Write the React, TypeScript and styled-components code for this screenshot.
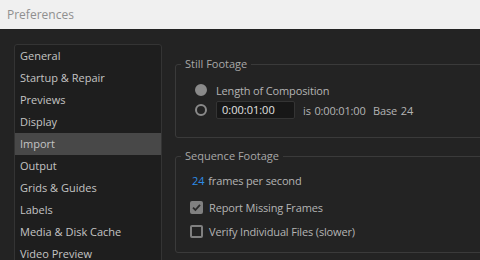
import React from 'react';
import styled, { createGlobalStyle } from 'styled-components';

const GlobalStyle = createGlobalStyle`
    html, body {
        margin: 0;
        padding: 0;
        background: #232323;
        overflow: hidden;
    }
    body {
        font-family: "Open Sans", "Noto Sans", sans-serif;
        font-size: 11px;
        -webkit-font-smoothing: antialiased;
    }
`;

const categories = [
    'General',
    'Startup & Repair',
    'Previews',
    'Display',
    'Import',
    'Output',
    'Grids & Guides',
    'Labels',
    'Media & Disk Cache',
    'Video Preview',
];

const Window = styled.div`
    width: 480px;
    height: 260px;
    display: flex;
    flex-direction: column;
    overflow: hidden;
`;

const TitleBar = styled.div`
    height: 29px;
    flex-shrink: 0;
    display: flex;
    align-items: center;
    padding-left: 7px;
    background: #f0f0f0;
    color: #8f8f8f;
    font-size: 12px;
`;

const Body = styled.div`
    display: flex;
    padding: 15px 0 0 14px;
    flex: 1;
    min-height: 0;
`;

const Sidebar = styled.ul`
    list-style: none;
    margin: 0;
    padding: 0;
    width: 146px;
    height: 240px;
    flex-shrink: 0;
    background: #1e1e1e;
    border: 1px solid #343434;
    border-radius: 3px;
`;

const SidebarItem = styled.li<{ $active?: boolean }>`
    height: 22px;
    line-height: 22px;
    padding-left: 5px;
    color: #c4c4c4;
    background: ${p => (p.$active ? '#484848' : 'transparent')};
    white-space: nowrap;
`;

const Content = styled.div`
    display: flex;
    flex-direction: column;
    gap: 10px;
    padding-left: 13px;
    margin-top: 12px;
`;

const Group = styled.fieldset`
    margin: 0;
    width: 400px;
    padding: 0 0 0 5px;
    border: 1px solid #3a3a3a;
    border-radius: 3px;
`;

const Legend = styled.legend`
    padding: 0 4px;
    line-height: 16px;
    color: #a8a8a8;
`;

const Rows = styled.div<{ $indent: number; $top: number; $bottom: number }>`
    display: flex;
    flex-direction: column;
    padding: ${p => p.$top}px 0 ${p => p.$bottom}px ${p => p.$indent}px;
`;

const Row = styled.div<{ $space?: number; $inset?: number }>`
    display: flex;
    align-items: center;
    height: 20px;
    margin-top: ${p => p.$space ?? 0}px;
    padding-left: ${p => p.$inset ?? 0}px;
    color: #b4b4b4;
    letter-spacing: -0.15px;
    white-space: nowrap;
`;

const Radio = styled.span<{ $checked?: boolean }>`
    box-sizing: border-box;
    width: 12px;
    height: 12px;
    border-radius: 50%;
    margin-right: 9px;
    border: 2px solid #8a8a8a;
    background: ${p => (p.$checked ? '#8a8a8a' : 'transparent')};
`;

const TimeField = styled.div`
    box-sizing: border-box;
    width: 79px;
    height: 18px;
    padding-left: 5px;
    line-height: 16px;
    background: #171717;
    border: 1px solid #343434;
    border-radius: 2px;
    color: #e2e2e2;
    letter-spacing: 0;
`;

const Note = styled.span`
    margin-left: 8px;
    word-spacing: 1px;
`;

const Rate = styled.span`
    color: #2e8ce8;
    margin-right: 4px;
`;

const Box = styled.span<{ $checked?: boolean }>`
    box-sizing: border-box;
    width: 13px;
    height: 13px;
    margin-right: 6px;
    border-radius: 2px;
    border: 2px solid #808080;
    background: ${p => (p.$checked ? '#808080' : 'transparent')};
    display: flex;
    align-items: center;
    justify-content: center;
`;

const Check = () => (
    <svg width="9" height="9" viewBox="0 0 9 9">
        <path d="M1 4.6 L3.4 7 L8 1.8" fill="none" stroke="#2a2a2a" strokeWidth="1.8" />
    </svg>
);

export default function App() {
    return (
        <Window>
            <GlobalStyle />
            <TitleBar>Preferences</TitleBar>
            <Body>
                <Sidebar>
                    {categories.map(c => (
                        <SidebarItem key={c} $active={c === 'Import'}>{c}</SidebarItem>
                    ))}
                </Sidebar>
                <Content>
                    <Group>
                        <Legend>Still Footage</Legend>
                        <Rows $indent={14} $top={8} $bottom={17}>
                            <Row>
                                <Radio $checked />
                                Length of Composition
                            </Row>
                            <Row>
                                <Radio />
                                <TimeField>0:00:01:00</TimeField>
                                <Note>is 0:00:01:00 &nbsp;Base 24</Note>
                            </Row>
                        </Rows>
                    </Group>
                    <Group>
                        <Legend>Sequence Footage</Legend>
                        <Rows $indent={9} $top={6} $bottom={11}>
                            <Row $inset={2}>
                                <Rate>24</Rate>
                                frames per second
                            </Row>
                            <Row $space={7}>
                                <Box $checked><Check /></Box>
                                Report Missing Frames
                            </Row>
                            <Row $space={4}>
                                <Box />
                                Verify Individual Files (slower)
                            </Row>
                        </Rows>
                    </Group>
                </Content>
            </Body>
        </Window>
    );
}
